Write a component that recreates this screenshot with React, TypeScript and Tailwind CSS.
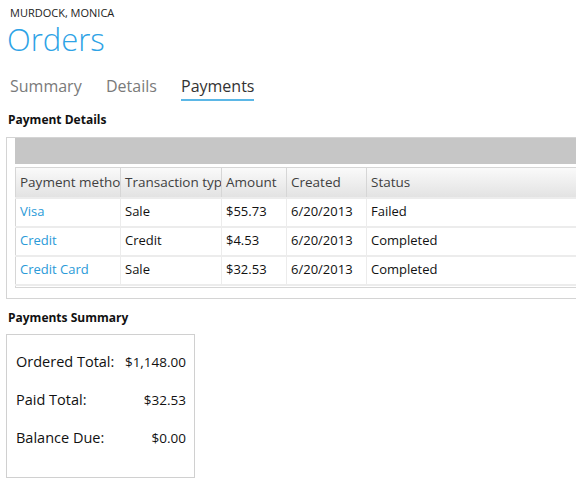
import React from "react";

interface Payment {
    method: string;
    type: string;
    amount: string;
    created: string;
    status: string;
}

const payments: Payment[] = [
    { method: "Visa", type: "Sale", amount: "$55.73", created: "6/20/2013", status: "Failed" },
    { method: "Credit", type: "Credit", amount: "$4.53", created: "6/20/2013", status: "Completed" },
    { method: "Credit Card", type: "Sale", amount: "$32.53", created: "6/20/2013", status: "Completed" },
];

const columns = [
    { label: "Payment method", width: "w-[105px]" },
    { label: "Transaction type", width: "w-[101px]" },
    { label: "Amount", width: "w-[65px]" },
    { label: "Created", width: "w-[80px]" },
    { label: "Status", width: "w-auto" },
];

const App: React.FC = () => {
    return (
        <div className="w-[576px] h-[483px] overflow-hidden bg-white text-[#111] font-['Open_Sans',sans-serif]">
            {/* Cabecera */}
            <div className="pl-[10px] pt-[6px] text-[11px] leading-[14px] text-[#222]">MURDOCK, MONICA</div>
            <h1 className="pl-[7px] mt-[1px] text-[31px] leading-[36px] font-light text-[#2ea3e6]">Orders</h1>

            {/* Pestañas */}
            <div className="flex pl-[10px] mt-[18px] text-[16px] leading-[22px]">
                <span className="text-[#7a7a7a] w-[96px]">Summary</span>
                <span className="text-[#7a7a7a] w-[75px]">Details</span>
                <span className="text-[#333] border-b-2 border-[#5bb7e6] pb-[2px]">Payments</span>
            </div>

            {/* Detalles de pago */}
            <h2 className="pl-[8px] mt-[10px] text-[12px] leading-[18px] font-bold text-[#111]">Payment Details</h2>
            <div className="ml-[6px] mt-[8px] w-[640px] border border-r-0 border-[#d4d4d4] pl-[8px] pb-[10px]">
                <div className="h-[26px] bg-[#c6c6c6]" />
                <table className="mt-[3px] table-fixed border-collapse border border-[#d6d6d6] w-full text-[13px]">
                    <thead>
                        <tr className="h-[30px] bg-gradient-to-b from-[#fafafa] to-[#e2e2e2]">
                            {columns.map((col, index) => (
                                <th
                                    key={index}
                                    className={`${col.width} px-[4px] text-left font-normal text-[13.5px] text-[#3f3f3f] border-r border-[#d6d6d6] overflow-hidden whitespace-nowrap`}
                                >
                                    {col.label}
                                </th>
                            ))}
                        </tr>
                    </thead>
                    <tbody>
                        {payments.map((p, index) => (
                            <tr key={index} className="h-[29px] border-t-2 border-[#ececec]">
                                <td className="px-[4px] text-[#2a9ad8] border-r border-[#ececec] whitespace-nowrap">{p.method}</td>
                                <td className="px-[4px] border-r border-[#ececec] whitespace-nowrap">{p.type}</td>
                                <td className="px-[4px] border-r border-[#ececec] whitespace-nowrap">{p.amount}</td>
                                <td className="px-[4px] border-r border-[#ececec] whitespace-nowrap">{p.created}</td>
                                <td className="px-[4px] whitespace-nowrap">{p.status}</td>
                            </tr>
                        ))}
                        <tr className="h-[3px] border-t-2 border-[#ececec]">
                            <td colSpan={5} />
                        </tr>
                    </tbody>
                </table>
            </div>

            {/* Resumen de pagos */}
            <h2 className="pl-[8px] mt-[10px] text-[12px] leading-[18px] font-bold text-[#111]">Payments Summary</h2>
            <div className="ml-[6px] mt-[7px] w-[189px] h-[144px] border border-[#d0d0d0] pl-[9px] pr-[8px] pt-[16px] text-[14.5px]">
                <div className="flex justify-between items-baseline h-[38px]">
                    <span>Ordered Total:</span>
                    <span className="text-[13.5px]">$1,148.00</span>
                </div>
                <div className="flex justify-between items-baseline h-[38px]">
                    <span>Paid Total:</span>
                    <span className="text-[13.5px]">$32.53</span>
                </div>
                <div className="flex justify-between items-baseline h-[38px]">
                    <span>Balance Due:</span>
                    <span className="text-[13.5px]">$0.00</span>
                </div>
            </div>
        </div>
    );
};

export default App;
